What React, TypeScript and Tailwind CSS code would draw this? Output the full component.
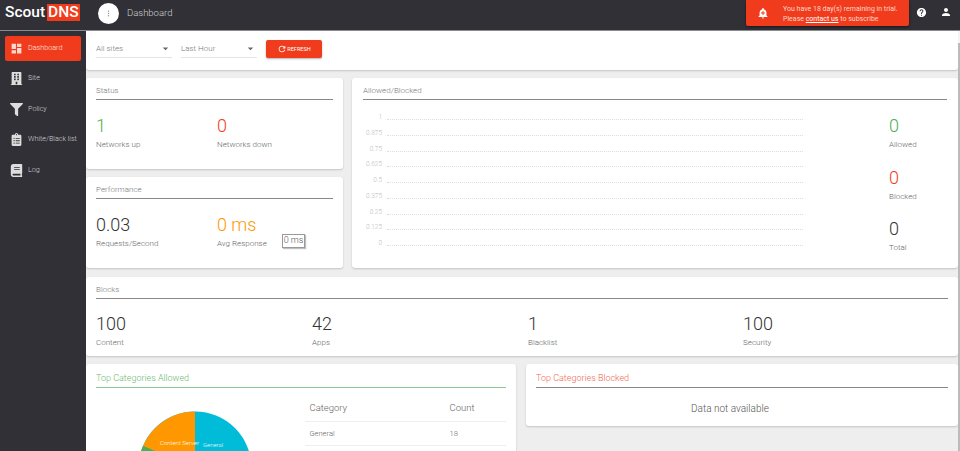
import type { ReactNode } from "react";
import { FaBook, FaBuilding, FaClipboardList, FaFilter } from "react-icons/fa";
import { MdAddAlert, MdArrowDropDown, MdDashboard, MdHelp, MdMoreVert, MdPerson, MdRefresh } from "react-icons/md";

const navItems = [
  { label: "Dashboard", icon: MdDashboard, active: true },
  { label: "Site", icon: FaBuilding },
  { label: "Policy", icon: FaFilter },
  { label: "White/Black list", icon: FaClipboardList },
  { label: "Log", icon: FaBook },
];

const chartTicks = ["1", "0.875", "0.75", "0.625", "0.5", "0.375", "0.25", "0.125", "0"];

function Card({ className = "", children }: { className?: string; children: ReactNode }) {
  return <div className={`rounded-[3px] bg-white shadow-[0_1px_2px_rgba(0,0,0,0.18)] ${className}`}>{children}</div>;
}

function CardTitle({ children, className = "h-[21px] pt-[7px] text-[#777] border-[#888]" }: { children: ReactNode; className?: string }) {
  return <div className={`border-b text-[8px] leading-[10px] font-light ${className}`}>{children}</div>;
}

function Stat({ value, label, color = "text-[#333]", className = "" }: { value: string; label: string; color?: string; className?: string }) {
  return (
    <div className={className}>
      <div className={`text-[18px] leading-[24px] font-light ${color}`}>{value}</div>
      <div className="mt-[2px] text-[8px] leading-[10px] font-light text-[#666]">{label}</div>
    </div>
  );
}

function Select({ label }: { label: string }) {
  return (
    <div className="flex h-[18px] w-[76px] items-center justify-between border-b border-[#e4e4e4] text-[8px] font-light text-[#777]">
      {label}
      <MdArrowDropDown size={13} className="text-[#666]" />
    </div>
  );
}

function Sidebar() {
  return (
    <aside className="flex w-[86px] shrink-0 flex-col gap-[5.4px] bg-[#303036] px-[5px] pt-[5px]">
      {navItems.map((item) => (
        <div
          key={item.label}
          className={`flex h-[25px] items-center gap-[5px] rounded-[2px] pl-[5px] text-[7.2px] font-light whitespace-nowrap ${
            item.active ? "bg-[#f03c1c] text-[#ffe9e2]" : "text-[#d4d4d4]"
          }`}
        >
          <span className="flex w-[13px] justify-center">
            <item.icon size={13} className={item.active ? "text-[#ffd9ce]" : "text-[#ddd]"} />
          </span>
          {item.label}
        </div>
      ))}
    </aside>
  );
}

function Chart() {
  return (
    <div className="mt-[11px] flex flex-col gap-[5.75px]">
      {chartTicks.map((t) => (
        <div key={t} className="flex h-[10px] items-start">
          <span className="mt-[2px] w-[19px] text-right text-[6.5px] leading-[8px] font-light text-[#bbb]">{t}</span>
          <span className="mt-[8px] ml-[5px] w-[416px] border-t border-dotted border-[#ddd]" />
        </div>
      ))}
    </div>
  );
}

function Pie() {
  return (
    <svg width="114" height="60" viewBox="0 0 114 60" className="mt-[23px] ml-[42px]">
      <circle cx="57" cy="57" r="56.5" fill="#00bcd9" />
      <path d="M57 57 L57 .5 A56.5 56.5 0 0 0 5 35 Z" fill="#ff9800" />
      <path d="M57 57 L5 35 A56.5 56.5 0 0 0 .5 57 Z" fill="#4caf50" />
      <text x="22" y="34" fontSize="6" fontWeight="300" fill="#fff">Content Server</text>
      <text x="65" y="36" fontSize="6" fontWeight="300" fill="#e8fbff">General</text>
    </svg>
  );
}

export default function App() {
  return (
    <div className="flex h-[451px] w-[960px] flex-col overflow-hidden bg-[#eeeeee] font-['Roboto',sans-serif]">
      <header className="flex h-[31px] shrink-0 items-start border-b border-[#8a8a8e] bg-[#303036]">
        <div className="flex h-[30px] w-[98px] items-start pt-[4px] pl-[5px]">
          <span className="text-[15.5px] leading-[17px] font-medium text-white">Scout</span>
          <span className="ml-[2px] bg-[#f03c1c] px-[1px] text-[15.5px] leading-[17px] font-medium text-white">DNS</span>
        </div>
        <div className="mt-[3px] flex h-[21px] w-[21px] items-center justify-center rounded-full bg-white">
          <MdMoreVert size={9} className="text-[#999]" />
        </div>
        <div className="ml-[8px] pt-[7px] text-[9.5px] leading-[12px] font-light text-[#d0d0d0]">Dashboard</div>
        <div className="ml-auto flex items-start">
          <div className="flex h-[26px] w-[163px] items-center rounded-b-[2px] bg-[#f03c1c] shadow-[0_1px_3px_rgba(0,0,0,0.5)]">
            <MdAddAlert size={12} className="ml-[11px] text-white" />
            <div className="mt-[1px] ml-[14px] text-[7px] leading-[10px] text-[#ffd5c9]">
              <div>You have 18 day(s) remaining in trial.</div>
              <div>
                Please <span className="text-white underline">contact us</span> to subscribe
              </div>
            </div>
          </div>
          <MdHelp size={11} className="mt-[7px] ml-[7px] text-white" />
          <MdPerson size={12} className="mt-[6px] mr-[8px] ml-[13px] text-white" />
        </div>
      </header>

      <div className="flex min-h-0 flex-1">
        <Sidebar />
        <main className="flex min-w-0 flex-1 flex-col gap-[8px] overflow-hidden">
          <Card className="flex h-[39px] shrink-0 items-center rounded-t-none pb-[3px] pl-[10px]">
            <Select label="All sites" />
            <div className="ml-[9px]">
              <Select label="Last Hour" />
            </div>
            <div className="ml-[9px] flex h-[18px] w-[56px] items-center justify-center rounded-[2px] bg-[#f03c1c] text-[5.5px] text-white shadow-[0_1px_2px_rgba(0,0,0,0.3)]">
              <MdRefresh size={10} />
              REFRESH
            </div>
          </Card>

          <div className="flex h-[190px] shrink-0 gap-[9px]">
            <div className="flex w-[257px] flex-col gap-[8px]">
              <Card className="h-[91px] px-[10px] pt-[1px]">
                <CardTitle>Status</CardTitle>
                <div className="mt-[14px] flex">
                  <Stat value="1" label="Networks up" color="text-[#4caf50]" className="w-[121px]" />
                  <Stat value="0" label="Networks down" color="text-[#f03c1c]" />
                </div>
              </Card>
              <Card className="relative h-[91px] px-[10px] pt-[1px]">
                <CardTitle>Performance</CardTitle>
                <div className="mt-[14px] flex">
                  <Stat value="0.03" label="Requests/Second" className="w-[121px]" />
                  <Stat value="0 ms" label="Avg Response" color="text-[#ff9800]" />
                </div>
                <div className="absolute top-[57px] left-[196px] flex h-[14px] w-[23px] items-center justify-center border border-[#999] bg-white text-[9px] font-light text-[#555] shadow-[1px_1px_1px_rgba(0,0,0,0.25)]">
                  0 ms
                </div>
              </Card>
            </div>
            <Card className="flex flex-1 flex-col px-[11px] pt-[1px]">
              <CardTitle>Allowed/Blocked</CardTitle>
              <div className="flex">
                <Chart />
                <div className="mt-[14px] ml-[86px] flex flex-col gap-[15.5px]">
                  <Stat value="0" label="Allowed" color="text-[#4caf50]" />
                  <Stat value="0" label="Blocked" color="text-[#f03c1c]" />
                  <Stat value="0" label="Total" />
                </div>
              </div>
            </Card>
          </div>

          <Card className="mt-[1px] h-[79px] shrink-0 px-[10px] pt-[1px]">
            <CardTitle>Blocks</CardTitle>
            <div className="mt-[13px] flex">
              <Stat value="100" label="Content" className="w-[216px]" />
              <Stat value="42" label="Apps" className="w-[216px]" />
              <Stat value="1" label="Blacklist" className="w-[215px]" />
              <Stat value="100" label="Security" />
            </div>
          </Card>

          <div className="flex items-start gap-[10px]">
            <Card className="h-[90px] w-[430px] shrink-0 px-[10px] pt-[1px]">
              <CardTitle className="h-[23px] border-[#8cc990] pt-[8px] text-[9px] text-[#6dbb72]">Top Categories Allowed</CardTitle>
              <div className="flex">
                <div className="w-[210px]">
                  <Pie />
                </div>
                <div className="w-[201px] font-light text-[#666]">
                  <div className="flex h-[34px] items-end border-b border-[#eee] pb-[7px] pl-[4px] text-[9.5px] leading-[12px]">
                    <span className="w-[140px]">Category</span>
                    <span>Count</span>
                  </div>
                  <div className="flex h-[24px] items-center border-b border-[#eee] pl-[4px] text-[7.5px]">
                    <span className="w-[140px]">General</span>
                    <span>18</span>
                  </div>
                </div>
              </div>
            </Card>
            <Card className="h-[62px] flex-1 px-[10px] pt-[1px]">
              <CardTitle className="h-[23px] border-[#888] pt-[8px] text-[9px] text-[#f0694f]">Top Categories Blocked</CardTitle>
              <div className="mt-[14px] pr-[24px] text-center text-[10px] leading-[13px] font-light text-[#555]">Data not available</div>
            </Card>
          </div>
        </main>
        <div className="flex w-[2px] shrink-0 flex-col bg-[#f4f4f4] pt-[12px]">
          <div className="h-full bg-[#bbb]" />
        </div>
      </div>
    </div>
  );
}
